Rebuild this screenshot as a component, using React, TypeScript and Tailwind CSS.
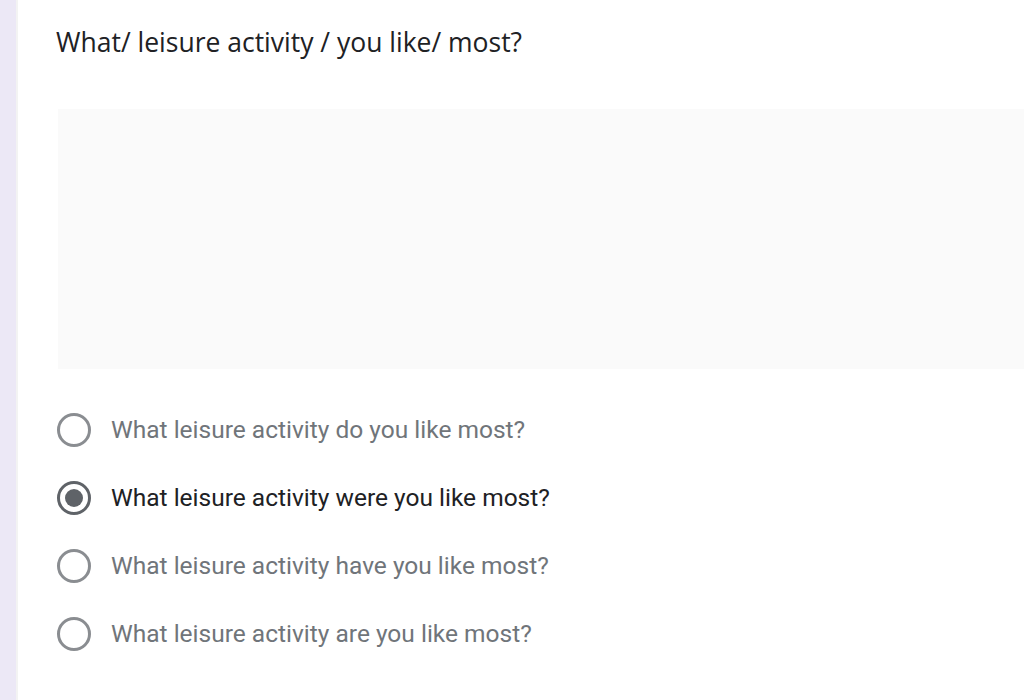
import React from "react";

const options = [
  { text: "What leisure activity do you like most?", selected: false },
  { text: "What leisure activity were you like most?", selected: true },
  { text: "What leisure activity have you like most?", selected: false },
  { text: "What leisure activity are you like most?", selected: false },
];

function Radio({ selected }: { selected: boolean }) {
  return (
    <svg width="36" height="36" viewBox="0 0 36 36" className="shrink-0">
      <circle cx="18" cy="18" r="15.5" fill="none" stroke={selected ? "#5f6368" : "#8a8d91"} strokeWidth="3" />
      {selected && <circle cx="18" cy="18" r="9" fill="#5f6368" />}
    </svg>
  );
}

export default function App() {
  return (
    <div className="flex h-[700px] w-[1024px] overflow-hidden bg-white">
      <div className="w-[16px] shrink-0 bg-[#ece8f6]" />
      <div className="w-[2px] shrink-0 bg-[#f3f3f3]" />
      <div className="flex flex-1 flex-col pl-[38px]">
        <div
          className="pt-[24px] text-[26.5px] leading-[36px] text-[#202124]"
          style={{ fontFamily: "'Open Sans', Roboto, sans-serif" }}
        >
          What/ leisure activity / you like/ most?
        </div>
        <div className="ml-[2px] mt-[49px] h-[260px] bg-[#fafafa]" />
        <div className="mt-[43px] flex flex-col gap-[32px]" style={{ fontFamily: "Roboto, sans-serif" }}>
          {options.map((o) => (
            <div key={o.text} className="flex h-[36px] items-center gap-[19px]">
              <Radio selected={o.selected} />
              <span className={`text-[24.5px] ${o.selected ? "text-[#202124]" : "text-[#70757a]"}`}>{o.text}</span>
            </div>
          ))}
        </div>
      </div>
    </div>
  );
}
